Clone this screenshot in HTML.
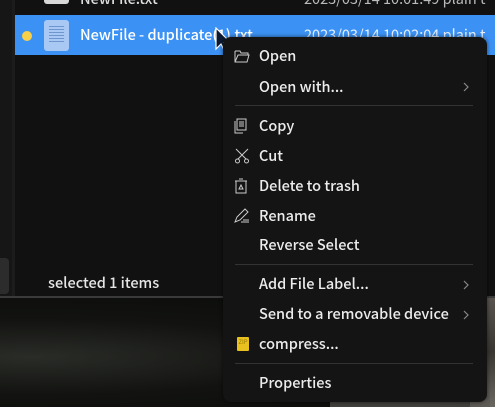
<!DOCTYPE html>
<html><head><style>
*{margin:0;padding:0;box-sizing:border-box}
body{width:495px;height:407px;overflow:hidden;background:#0c0d0b;font-family:"Noto Sans CJK SC","Liberation Sans",sans-serif;position:relative;color:#eee}
.abs{position:absolute}
.menu{left:223px;top:37px;width:264px;height:365px;background:#141414;border-radius:8px;box-shadow:0 0 4px rgba(0,0,0,.6)}
.it{position:absolute;left:36px;font-size:14.5px;line-height:20px;color:#ececec;white-space:nowrap;font-weight:500}
.sep{position:absolute;left:12px;right:14px;height:1px;background:#333}
.arr{position:absolute;left:240px}
.ic{position:absolute;left:11px}
</style></head><body>
<div class="abs" style="left:0;top:297px;width:495px;height:110px;background:radial-gradient(ellipse at 30px 60px,#2a2c28 0%,#121310 45%,#0a0b09 100%)"></div>
<div class="abs" style="left:470px;top:296px;width:25px;height:111px;background:linear-gradient(180deg,#5a5550,#3a3632 50%,#6a6660)"></div>
<div class="abs" style="left:330px;top:395px;width:160px;height:12px;background:#5a5752;opacity:.7"></div>
<div class="abs" style="left:0;top:0;width:495px;height:297px;background:#111111"></div>
<div class="abs" style="left:0;top:0;width:12px;height:297px;background:#161616"></div>
<div class="abs" style="left:12px;top:0;width:3px;height:297px;background:#1c1c1c"></div>
<div class="abs" style="left:0;top:258px;width:9px;height:36px;background:#2c2c2c;border-radius:0 4px 4px 0"></div>
<div class="abs" style="left:0;top:296px;width:495px;height:2px;background:#3a3a3a"></div>
<div class="abs" style="left:44px;top:-10px;width:25px;height:14px;background:#d8d8d8;border-radius:3px"></div>
<div class="abs" style="left:80px;top:-12px;font-size:14.5px;color:#ddd;font-weight:500">NewFile.txt</div>
<div class="abs" style="left:304px;top:-12px;font-size:14.5px;color:#bbb">2023/03/14 10:01:49 plain t</div>
<div class="abs" style="left:15px;top:15px;width:480px;height:40px;background:#3c92f4"></div>
<div class="abs" style="left:22px;top:31px;width:10px;height:10px;border-radius:50%;background:#f8d04a"></div>
<div class="abs" style="left:44px;top:20px;width:25px;height:31px;background:#a9c8f4;border-radius:3px"></div>
<div class="abs" style="left:49px;top:26px;width:15px;height:18px;background:repeating-linear-gradient(180deg,#6f95cf 0 1px,transparent 1px 3px)"></div>
<div class="abs" style="left:80px;top:25px;font-size:14.5px;line-height:20px;color:#fff;font-weight:500">NewFile - duplicate(1).txt</div>
<div class="abs" style="left:304px;top:25px;font-size:14.5px;line-height:20px;color:#e6f0ff">2023/03/14 10:02:04 plain t</div>
<svg class="abs" style="left:214px;top:27px" width="20" height="26" viewBox="0 0 20 26"><path d="M2 1 L2 22 L7 17 L11 25 L14 23 L10 16 L17 16 Z" fill="#0b1a30" stroke="#fff" stroke-width="1.2"/></svg>
<div class="abs menu">
<svg class="ic" style="top:12px" width="16" height="14" viewBox="0 0 16 14"><path d="M1 2h5l1 2h7v2M1 2v11h12l2-7H4l-3 7" fill="none" stroke="#ccc" stroke-width="1"/></svg>
<div class="it" style="top:9px">Open</div>
<div class="it" style="top:40px">Open with...</div><svg class="arr" style="top:45px" width="6" height="10" viewBox="0 0 6 10"><path d="M1 1l4 4-4 4" fill="none" stroke="#888" stroke-width="1.2"/></svg>
<div class="sep" style="top:68px"></div>
<svg class="ic" style="top:81px" width="14" height="16" viewBox="0 0 14 16"><path d="M3 1h9v11H3zM1 3v12h8M5 4h5M5 6h5M5 8h5" fill="none" stroke="#ccc"/></svg>
<div class="it" style="top:79px">Copy</div>
<svg class="ic" style="top:111px" width="16" height="16" viewBox="0 0 16 16"><path d="M2 1l10 10M14 1L4 11" stroke="#ccc" fill="none"/><circle cx="3.5" cy="13" r="2" fill="none" stroke="#ccc"/><circle cx="12.5" cy="13" r="2" fill="none" stroke="#ccc"/></svg>
<div class="it" style="top:109px">Cut</div>
<svg class="ic" style="top:141px" width="14" height="16" viewBox="0 0 14 16"><path d="M1 3h12M5 1h4M2 3v12h10V3M7 7l-2 4h4z" fill="none" stroke="#ccc"/></svg>
<div class="it" style="top:139px">Delete to trash</div>
<svg class="ic" style="top:171px" width="16" height="16" viewBox="0 0 16 16"><path d="M1 14l2-5 8-8 3 3-8 8zM7 14h8M9 12h6" fill="none" stroke="#ccc"/></svg>
<div class="it" style="top:169px">Rename</div>
<div class="it" style="top:198px">Reverse Select</div>
<div class="sep" style="top:227px"></div>
<div class="it" style="top:237px">Add File Label...</div><svg class="arr" style="top:243px" width="6" height="10" viewBox="0 0 6 10"><path d="M1 1l4 4-4 4" fill="none" stroke="#888" stroke-width="1.2"/></svg>
<div class="it" style="top:267px">Send to a removable device</div><svg class="arr" style="top:273px" width="6" height="10" viewBox="0 0 6 10"><path d="M1 1l4 4-4 4" fill="none" stroke="#888" stroke-width="1.2"/></svg>
<div class="ic" style="top:300px;left:14px;width:12px;height:14px;background:#e8c020;border-radius:1px;font-size:6px;color:#9a7a00;text-align:center;line-height:10px">ZIP</div>
<div class="it" style="top:297px">compress...</div>
<div class="sep" style="top:326px"></div>
<div class="it" style="top:336px">Properties</div>
</div>
<div class="abs" style="left:48px;top:273px;font-size:14.5px;line-height:20px;color:#e6e6e6;font-weight:500">selected 1 items</div>
</body></html>
